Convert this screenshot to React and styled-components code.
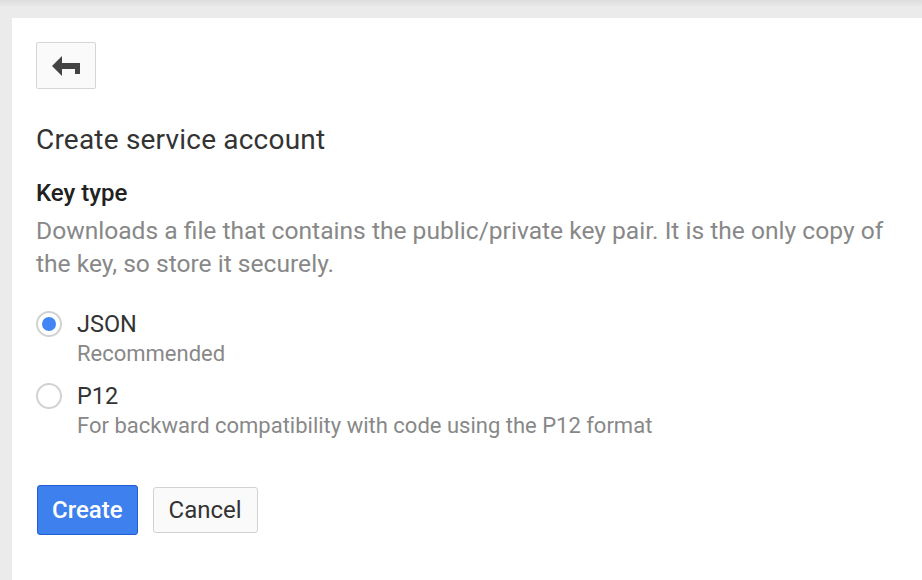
import React, { useState } from 'react';
import styled, { createGlobalStyle } from 'styled-components';

const GlobalStyle = createGlobalStyle`
  html, body {
    margin: 0;
    padding: 0;
    background: #ebebeb;
    font-family: Roboto, "Liberation Sans", Arial, sans-serif;
  }
`;

const Page = styled.div`
  width: 922px;
  height: 580px;
  overflow: hidden;
  background: #ebebeb;
  display: flex;
  flex-direction: column;
`;

const TopBar = styled.div`
  height: 18px;
  flex-shrink: 0;
  background: linear-gradient(#dcdcdc, #ebebeb 40%, #ebebeb);
`;

const Card = styled.div`
  flex: 1;
  margin-left: 12px;
  background: #fff;
  padding: 24px 0 0 24px;
`;

const BackButton = styled.button`
  width: 60px;
  height: 47px;
  border: 1px solid #d6d6d6;
  border-radius: 2px;
  background: #fafafa;
  display: flex;
  align-items: center;
  justify-content: center;
  padding: 0;
  cursor: pointer;
`;

const Title = styled.h1`
  margin: 33px 0 0;
  font-size: 28px;
  line-height: 36px;
  letter-spacing: 0.2px;
  font-weight: 400;
  color: #333;
`;

const Label = styled.h2`
  margin: 20px 0 0;
  font-size: 24px;
  line-height: 30px;
  font-weight: 500;
  color: #212121;
`;

const Description = styled.p`
  margin: 6px 0 0;
  width: 862px;
  font-size: 24.6px;
  line-height: 33px;
  color: #888;
`;

const Options = styled.div`
  margin-top: 29px;
  display: flex;
  flex-direction: column;
  gap: 12px;
`;

const Option = styled.label`
  display: grid;
  grid-template-columns: 26px 1fr;
  column-gap: 15px;
  cursor: pointer;
`;

const Radio = styled.span`
  width: 22px;
  height: 22px;
  border: 2px solid #d2d2d2;
  border-radius: 50%;
  background: #fff;
  display: flex;
  align-items: center;
  justify-content: center;
  margin-top: 2px;

  &::after {
    content: '';
    width: 14px;
    height: 14px;
    border-radius: 50%;
    background: ${p => (p.$checked ? '#4285f4' : 'transparent')};
  }
`;

const OptionText = styled.div`
  display: flex;
  flex-direction: column;
`;

const OptionName = styled.span`
  font-size: 23.5px;
  line-height: 30px;
  color: #333;
`;

const OptionHint = styled.span`
  font-size: 22px;
  line-height: 30px;
  color: #888;
`;

const Actions = styled.div`
  margin-top: 44px;
  display: flex;
  align-items: center;
  gap: 15px;
  padding-left: 1px;
`;

const Button = styled.button`
  height: ${p => (p.$primary ? '50px' : '46px')};
  padding: 0 ${p => (p.$primary ? '14px' : '15px')};
  border-radius: 3px;
  font-family: inherit;
  font-size: 24px;
  cursor: pointer;
  border: 1px solid ${p => (p.$primary ? '#1f5fcf' : '#d2d2d2')};
  background: ${p => (p.$primary ? '#3e80ee' : '#fafafa')};
  color: ${p => (p.$primary ? '#fff' : '#333')};
  font-weight: ${p => (p.$primary ? 500 : 400)};
`;

const BackIcon = () => (
  <svg width="32" height="24" viewBox="0 0 32 24" fill="#444">
    <polygon points="2,12 12,2 12,22" />
    <rect x="11" y="9" width="19" height="6" />
    <rect x="25" y="9" width="5" height="11" />
  </svg>
);

const options = [
  { id: 'json', name: 'JSON', hint: 'Recommended' },
  { id: 'p12', name: 'P12', hint: 'For backward compatibility with code using the P12 format' },
];

export default function App() {
  const [keyType, setKeyType] = useState('json');

  return (
    <Page>
      <GlobalStyle />
      <TopBar />
      <Card>
        <BackButton aria-label="Back">
          <BackIcon />
        </BackButton>
        <Title>Create service account</Title>
        <Label>Key type</Label>
        <Description>
          Downloads a file that contains the public/private key pair. It is the only copy of the key, so
          store it securely.
        </Description>
        <Options>
          {options.map(o => (
            <Option key={o.id} onClick={() => setKeyType(o.id)}>
              <Radio $checked={keyType === o.id} />
              <OptionText>
                <OptionName>{o.name}</OptionName>
                <OptionHint>{o.hint}</OptionHint>
              </OptionText>
            </Option>
          ))}
        </Options>
        <Actions>
          <Button $primary>Create</Button>
          <Button>Cancel</Button>
        </Actions>
      </Card>
    </Page>
  );
}
